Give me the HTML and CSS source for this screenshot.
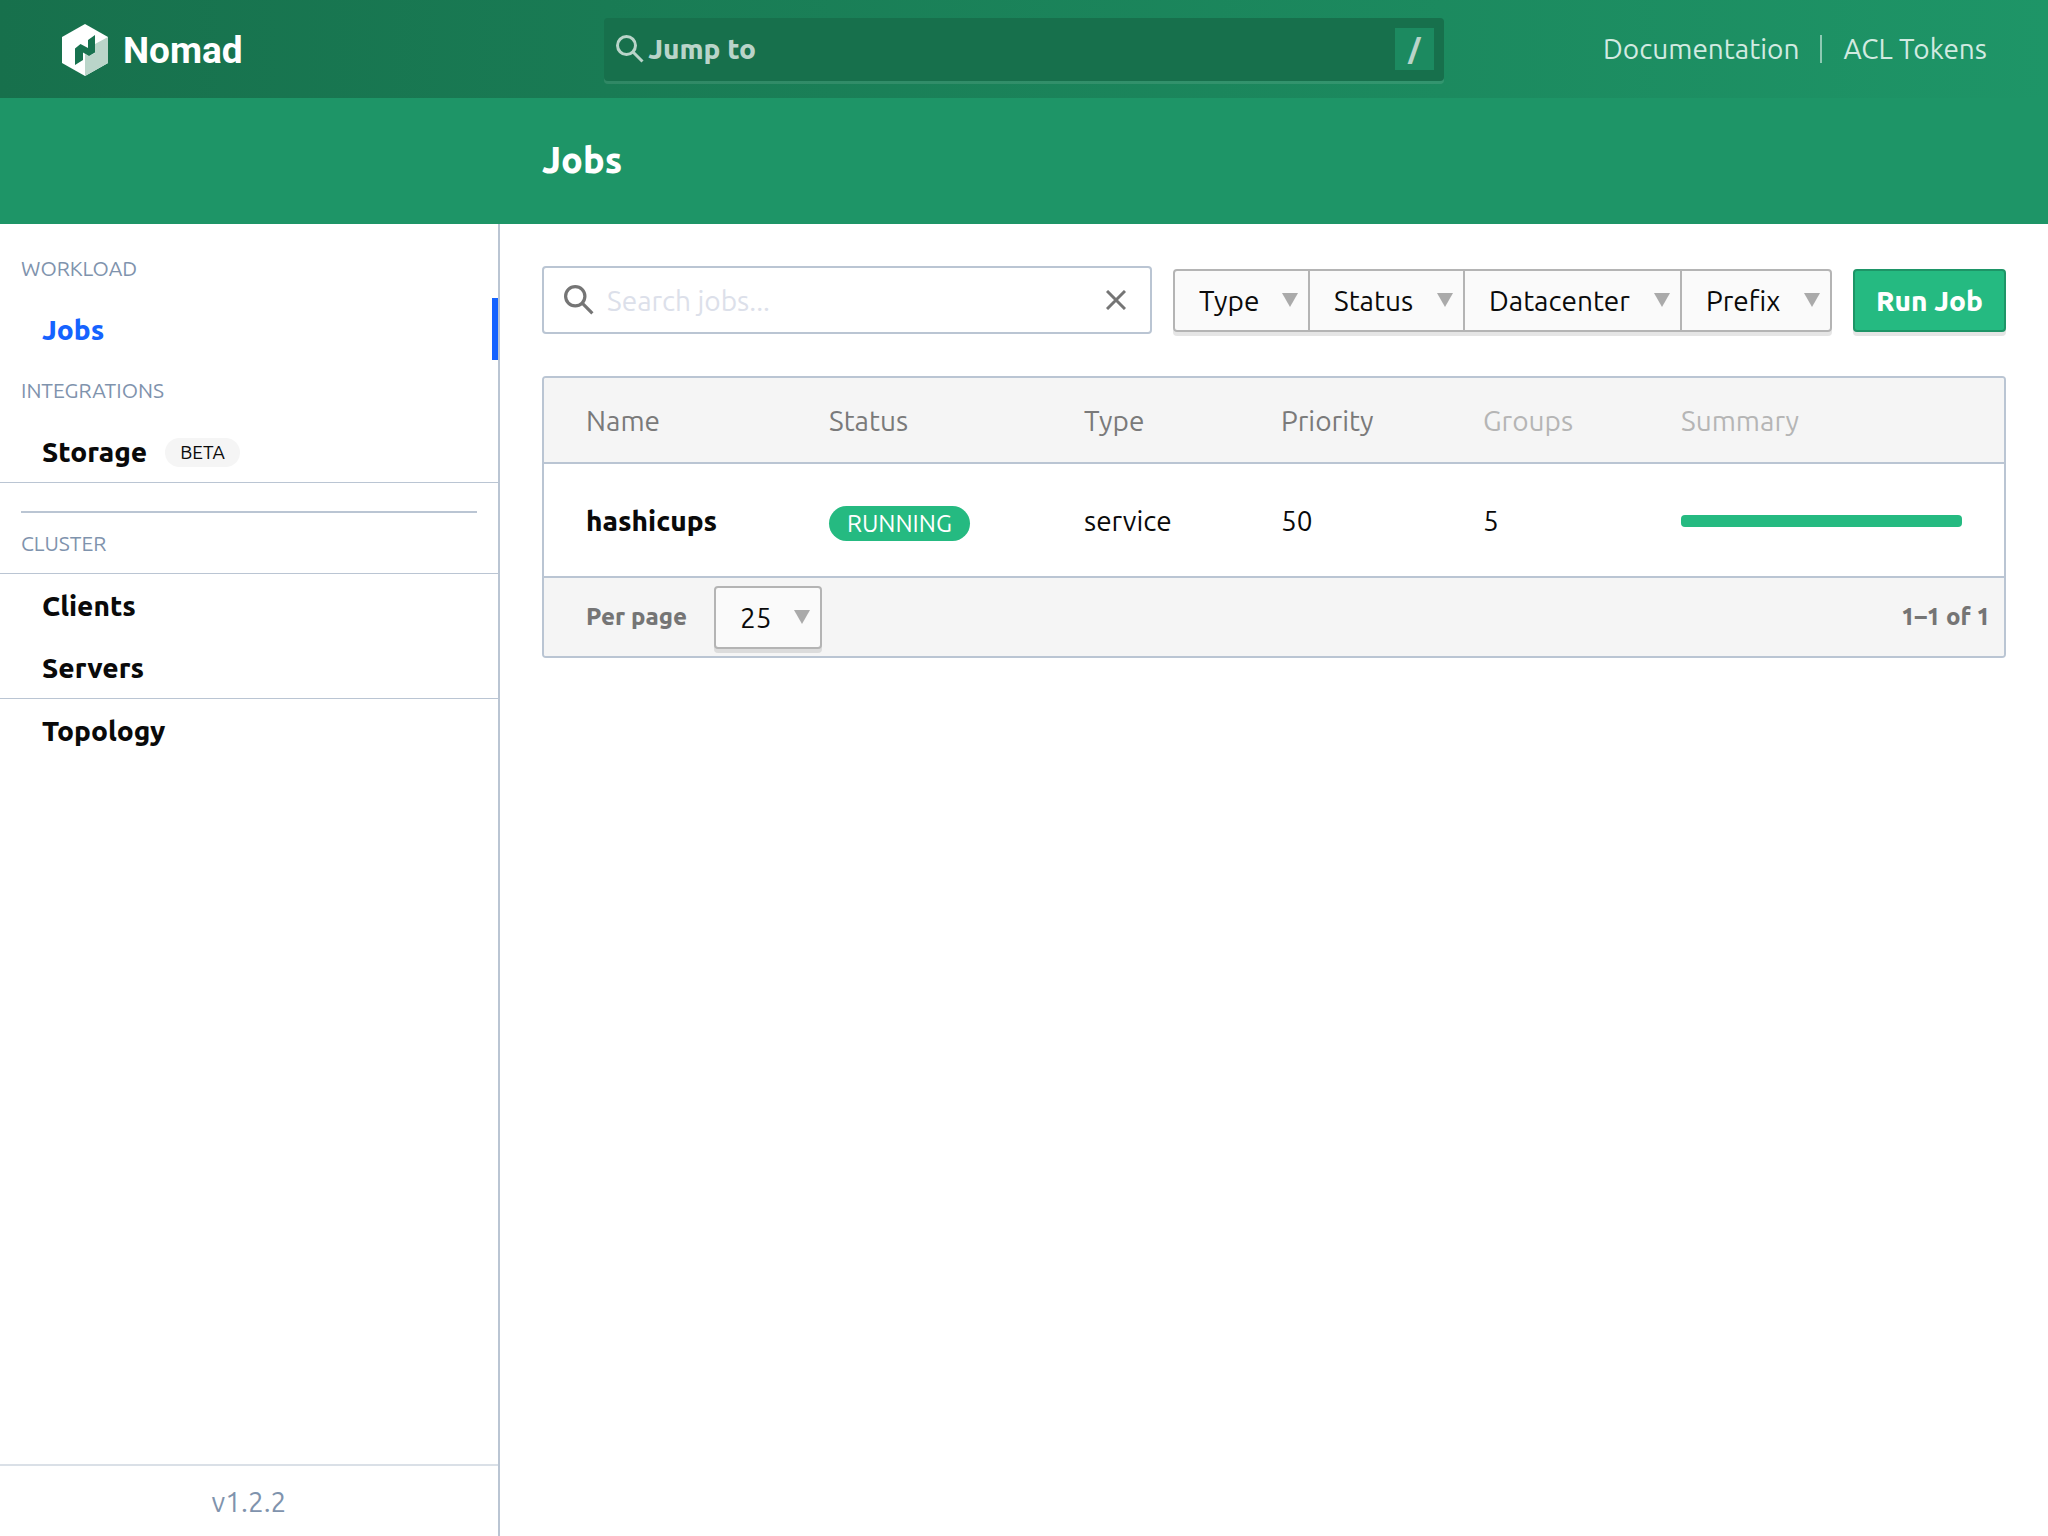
FILE: index.html
```html
<!DOCTYPE html>
<html lang="en">
<head>
<meta charset="utf-8">
<meta name="viewport" content="width=device-width, initial-scale=1">
<title>Jobs - Nomad</title>
<link rel="stylesheet" href="styles.css">
</head>
<body>
<header>
  <div class="navbar">
    <a class="brand" href="#" aria-label="Nomad home">
      <svg class="brand-mark" viewBox="0 0 46 52" aria-hidden="true">
        <path fill="#fff" d="M23 0 0 13v26l23 13 23-13V13z"/>
        <path fill="#bad5c9" d="M46 13 33 20v9l-6 3-4-2v22l23-13z"/>
        <path fill="#18724f" d="M13 24.500 18.500 20l7.500 4V16l7-5v17.500L27 32l-6-3.500V36l-8 5z"/>
      </svg>
      <span>Nomad</span>
    </a>
    <button class="jump" type="button">
      <svg viewBox="0 0 28 28" aria-hidden="true"><circle cx="10.500" cy="10.500" r="9"/><path d="m17 17 9.500 9.500"/></svg>
      <span>Jump to</span>
      <kbd>/</kbd>
    </button>
    <nav class="navbar-end" aria-label="Help">
      <a href="#">Documentation</a>
      <a href="#">ACL Tokens</a>
    </nav>
  </div>
  <div class="titlebar"><h1>Jobs</h1></div>
</header>
<div class="page">
  <aside class="sidebar">
    <nav aria-label="Main">
      <p class="menu-label">Workload</p>
      <ul><li><a class="active" href="#">Jobs</a></li></ul>
      <p class="menu-label">Integrations</p>
      <ul class="ruled-below"><li><a href="#">Storage <span class="badge">BETA</span></a></li></ul>
      <hr>
      <p class="menu-label">Cluster</p>
      <ul class="ruled-above ruled-below">
        <li><a href="#">Clients</a></li>
        <li><a href="#">Servers</a></li>
      </ul>
      <ul><li><a href="#">Topology</a></li></ul>
    </nav>
    <footer>v1.2.2</footer>
  </aside>
  <main>
    <div class="toolbar">
      <div class="search">
        <svg class="search-icon" viewBox="0 0 28 28" aria-hidden="true"><circle cx="10.500" cy="10.500" r="9"/><path d="m17 17 9.500 9.500"/></svg>
        <input type="text" placeholder="Search jobs..." aria-label="Search jobs">
        <button type="button" aria-label="Clear search"><svg viewBox="0 0 20 20" aria-hidden="true"><path d="m1 1 18 18M19 1 1 19"/></svg></button>
      </div>
      <div class="filters">
        <span class="dropdown type"><select aria-label="Type"><option>Type</option></select></span>
        <span class="dropdown status"><select aria-label="Status"><option>Status</option></select></span>
        <span class="dropdown datacenter"><select aria-label="Datacenter"><option>Datacenter</option></select></span>
        <span class="dropdown prefix"><select aria-label="Prefix"><option>Prefix</option></select></span>
      </div>
      <button class="run" type="button">Run Job</button>
    </div>
    <div class="jobs">
      <table>
        <colgroup><col class="c-name"><col class="c-status"><col class="c-type"><col class="c-priority"><col class="c-groups"><col></colgroup>
        <thead>
          <tr><th>Name</th><th>Status</th><th>Type</th><th>Priority</th><th class="plain">Groups</th><th class="plain">Summary</th></tr>
        </thead>
        <tbody>
          <tr>
            <td><a href="#">hashicups</a></td>
            <td><span class="tag">RUNNING</span></td>
            <td>service</td>
            <td>50</td>
            <td>5</td>
            <td><div class="bar" role="img" aria-label="All allocations running"></div></td>
          </tr>
        </tbody>
      </table>
      <div class="pager">
        <label for="per-page">Per page</label>
        <span class="dropdown count"><select id="per-page"><option>25</option></select></span>
        <span class="range">1–1 of 1</span>
      </div>
    </div>
  </main>
</div>
</body>
</html>
```

FILE: styles.css
```css
* { box-sizing: border-box; }

body {
  margin: 0;
  min-height: 100vh;
  display: flex;
  flex-direction: column;
  background: #fff;
  color: #0a0a0a;
  font: 28px/42px Ubuntu, "Noto Sans", sans-serif;
}

a { color: inherit; text-decoration: none; }
button, input, select { font: inherit; color: inherit; margin: 0; }
ul { list-style: none; margin: 0; padding: 0; }
svg { display: block; fill: none; }

.navbar {
  display: grid;
  grid-template-columns: 1fr 41% 1fr;
  align-items: center;
  height: 98px;
  background: linear-gradient(to right, #17704c, #1e9567);
}

.brand {
  display: flex;
  align-items: center;
  gap: 15px;
  padding: 2px 0 0 62px;
  color: #fff;
  font: bold 37px/52px Roboto, sans-serif;
}
.brand span { padding-top: 2px; }
.brand-mark { width: 46px; height: 52px; }

.jump {
  display: flex;
  align-items: center;
  gap: 4px;
  height: 63px;
  padding: 0 10px 0 12px;
  border: 0;
  border-radius: 4px;
  background: #17704c;
  box-shadow: 0 3px 0 rgba(255, 255, 255, 0.1);
  color: #b9d4c9;
}
.jump svg { width: 28px; height: 28px; stroke: currentColor; stroke-width: 3; }
.jump kbd {
  width: 39px;
  margin-left: auto;
  background: #1c8a60;
  text-align: center;
  font: inherit;
}

.jump, h1, .sidebar li a, .run, td a, .pager { font-weight: 800; }

.navbar-end {
  display: flex;
  justify-content: flex-end;
  padding-right: 61px;
  color: #d2eae1;
  line-height: 28px;
}
.navbar-end a + a {
  margin-left: 21px;
  padding-left: 21px;
  border-left: 2px solid #8ecab3;
}

.titlebar {
  display: flex;
  align-items: center;
  height: 126px;
  padding: 0 0 2px 542px;
  background: #1e9567;
  color: #fff;
}
h1 { margin: 0; font-size: 36px; line-height: 42px; }

.page { flex: 1; display: flex; }

.sidebar {
  display: flex;
  flex-direction: column;
  justify-content: space-between;
  flex: 0 0 500px;
  padding-top: 14px;
  border-right: 2px solid #bac5d3;
}
.menu-label {
  margin: 0;
  padding-left: 21px;
  color: #7f93ad;
  font-size: 21px;
  line-height: 60px;
  text-transform: uppercase;
}
.sidebar li a {
  display: flex;
  align-items: center;
  height: 62px;
  padding: 2px 0 0 42px;
}
.sidebar .active { color: #1563ff; border-right: 6px solid #1563ff; }
.ruled-above { border-top: 1px solid #bac5d3; }
.ruled-below { border-bottom: 1px solid #bac5d3; }
.sidebar hr {
  height: 2px;
  margin: 28px 21px 0;
  border: 0;
  background: #bac5d3;
}
.badge {
  margin-left: 18px;
  padding: 0 15px;
  border-radius: 15px;
  background: #f5f5f5;
  font-size: 19px;
  font-weight: normal;
  line-height: 29px;
}
.sidebar footer {
  padding-top: 2px;
  border-top: 2px solid #dae0e7;
  color: #7f93ad;
  line-height: 68px;
  text-align: center;
}

main { flex: 1; padding: 42px; min-width: 0; }

.toolbar { display: flex; align-items: center; margin-bottom: 42px; }

.search {
  flex: 1;
  display: flex;
  align-items: center;
  height: 68px;
  padding: 0 24px 0 20px;
  border: 2px solid #bac5d3;
  border-radius: 4px;
}
.search svg { stroke: #757575; stroke-width: 3; }
.search-icon { width: 30px; height: 30px; }
.search input {
  flex: 1;
  min-width: 0;
  height: 60px;
  padding: 0 13px;
  border: 0;
  outline: 0;
  background: none;
}
.search input::placeholder { color: #dce0ea; opacity: 1; }
.search button { padding: 0; border: 0; background: none; }
.search button svg { width: 20px; height: 20px; }

.filters {
  display: flex;
  margin: 0 21px;
  border-radius: 4px;
  box-shadow: 0 4px 0 rgba(0, 0, 0, 0.1);
}
.filters .dropdown + .dropdown { margin-left: -2px; }
.dropdown { position: relative; }
.dropdown::after {
  content: "";
  position: absolute;
  top: 24px;
  right: 12px;
  border: solid transparent;
  border-width: 14px 8px 0;
  border-top-color: #aaa;
  pointer-events: none;
}
.dropdown select {
  appearance: none;
  display: block;
  width: 100%;
  height: 63px;
  padding: 1px 0 0 24px;
  border: 2px solid #b4b4b4;
  border-radius: 0;
  background: #fafafa;
}
.type { width: 137px; }
.status { width: 157px; }
.datacenter { width: 219px; }
.prefix { width: 152px; }
.count { width: 108px; }
.dropdown.type select { border-radius: 4px 0 0 4px; }
.dropdown.prefix select { border-radius: 0 4px 4px 0; }
.dropdown.count select { border-radius: 4px; box-shadow: 0 4px 0 rgba(0, 0, 0, 0.1); }

.run {
  width: 153px;
  height: 63px;
  padding: 1px 0 0;
  border: 2px solid #1e9567;
  border-radius: 4px;
  background: #25ba81;
  box-shadow: 0 4px 0 rgba(0, 0, 0, 0.1);
  color: #fff;
}

.jobs { border: 2px solid #bac5d3; border-radius: 4px; overflow: hidden; }
table { width: 100%; table-layout: fixed; border-collapse: collapse; }
.c-name { width: 243px; }
.c-status { width: 255px; }
.c-type { width: 197px; }
.c-priority { width: 202px; }
.c-groups { width: 198px; }
th, td { padding: 0 0 0 42px; text-align: left; }
th {
  height: 85px;
  padding-top: 2px;
  border-bottom: 2px solid #bac5d3;
  background: #f5f5f5;
  color: #7a7a7a;
  font-weight: normal;
}
th.plain { color: #b5b5b5; }
td { height: 113px; padding-top: 1px; }
.tag {
  display: inline-block;
  padding: 0 18px;
  border-radius: 18px;
  background: #25ba81;
  color: #fff;
  font-size: 24px;
  line-height: 35px;
  vertical-align: middle;
}
.bar { height: 12px; margin-right: 42px; border-radius: 4px; background: #25ba81; }

.pager {
  display: flex;
  align-items: center;
  height: 80px;
  padding: 0 14px 0 42px;
  border-top: 2px solid #bac5d3;
  background: #f5f5f5;
  color: #757575;
  font-size: 24px;
}
.pager label { width: 128px; }
.pager .dropdown { color: #0a0a0a; font-size: 28px; font-weight: normal; }
.range { margin-left: auto; }
```
